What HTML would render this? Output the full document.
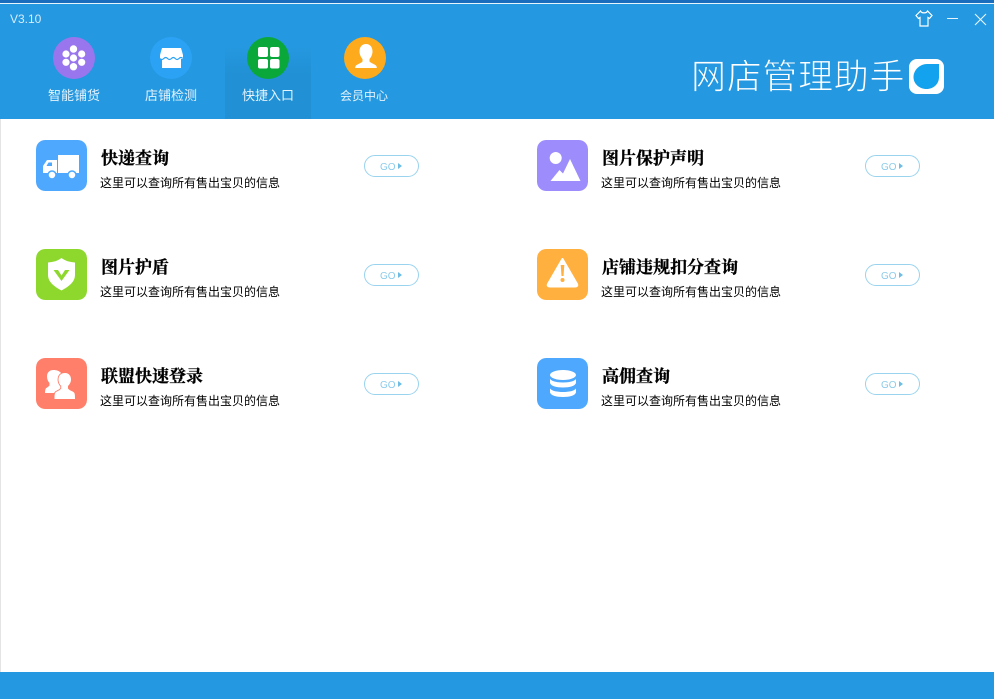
<!DOCTYPE html>
<html lang="zh"><head><meta charset="utf-8"><style>
*{box-sizing:border-box;margin:0;padding:0}
html,body{width:994px;height:699px;overflow:hidden;background:#fff;font-family:"Liberation Sans","Noto Sans CJK SC",sans-serif}
.abs,.abs *{position:absolute}
svg *{position:static}
#top{left:0;top:0;width:994px;height:119px;background:#2498e0}
.t{white-space:nowrap}
.nav{font-size:13px;color:#e4f3fd;top:87px;line-height:16px;width:80px;text-align:center}
.title{font-family:"Liberation Serif","Noto Serif CJK SC",serif;font-weight:700;font-size:17px;color:#000;line-height:20px;white-space:nowrap;-webkit-text-stroke:.3px #000}
.sub{font-size:12px;color:#000;line-height:16px;white-space:nowrap}
.go{width:55px;height:22px;border:1px solid #9ad3ee;border-radius:11px;background:#fff}
.go span{left:15px;top:5px;font-size:10px;line-height:14px;color:#8ccbea}
.go i{left:33px;top:7px;width:0;height:0;border-left:4px solid #6fbce4;border-top:3px solid transparent;border-bottom:3px solid transparent}
.ic{width:51px;height:51px;border-radius:9px}
</style></head><body>
<div class="abs" style="left:0;top:0;width:994px;height:699px">
<div id="top"></div>
<div style="left:0;top:0;width:994px;height:3px;background:#1a6cbc"></div>
<div style="left:0;top:3px;width:994px;height:1px;background:#e6f4fc"></div>
<div style="left:0;top:119px;width:1px;height:553px;background:#e4e4e4"></div>
<div style="left:0;top:672px;width:994px;height:27px;background:#2498e0"></div>
<div style="left:225px;top:47px;width:86px;height:72px;background:linear-gradient(#2498e0,#2190d4 40%)"></div>

<div class="t" style="left:10px;top:12px;font-size:12px;line-height:15px;color:#d6edfc">V3.10</div>

<svg style="left:53px;top:37px" width="42" height="42"><circle cx="21" cy="21" r="21" fill="#9a76ee"/><g fill="#fff"><circle cx="20.500" cy="12" r="3.700"/><circle cx="13" cy="17" r="3.600"/><circle cx="28.700" cy="17" r="3.600"/><circle cx="20.500" cy="21" r="3.600"/><circle cx="13" cy="25.300" r="3.600"/><circle cx="28.700" cy="25.300" r="3.600"/><circle cx="20.500" cy="29.700" r="3.700"/></g></svg>
<svg style="left:150px;top:37px" width="42" height="42"><circle cx="21" cy="21" r="21" fill="#2ca2f5"/><path d="M12 11h19l2 7v4H10v-4z" fill="#fff"/><rect x="12" y="22" width="19" height="9" fill="#fff"/><path d="M10 21.500q1.900 2 3.800 0t3.800 0 3.800 0 3.800 0 3.800 0 3.800 0" fill="none" stroke="#2ca2f5" stroke-width="1.200"/></svg>
<svg style="left:247px;top:37px" width="42" height="42"><circle cx="21" cy="21" r="21" fill="#0aa73a"/><g fill="#fff"><rect x="11" y="10" width="10" height="10" rx="2"/><rect x="23" y="10" width="9.500" height="10" rx="2"/><rect x="11" y="22" width="10" height="9.500" rx="2"/><rect x="23" y="22" width="9.500" height="9.500" rx="2"/></g></svg>
<svg style="left:344px;top:37px" width="42" height="42"><circle cx="21" cy="21" r="21" fill="#fdaa1c"/><path d="M22 7c-4.500 0-6.500 3.500-6.500 7.500 0 3 1.500 6 3 7.500v2.500c-1 1.500-5 2.500-6.500 4-.8.8-.8 2.500-.8 2.500h21.600s0-1.700-.8-2.500c-1.500-1.500-5.500-2.500-6.500-4V22c1.500-1.500 3-4.500 3-7.500 0-4-2-7.500-6.500-7.500z" fill="#fff"/></svg>

<div class="nav" style="left:34px;top:88px">智能铺货</div>
<div class="nav" style="left:131px;top:88px">店铺检测</div>
<div class="nav" style="left:228px;top:88px">快捷入口</div>
<div class="nav" style="left:324px;top:88px;font-size:12px">会员中心</div>

<svg style="left:914px;top:9px" width="20" height="19" fill="none" stroke="#fff" stroke-width="1.200"><path d="M6.500 2 2 6.500l2.500 3L6 8.500V17h8V8.500l1.500 1L18 6.500 13.500 2c-1 2.500-6 2.500-7 0z"/></svg>
<div style="left:947px;top:18px;width:11px;height:1px;background:#e8f5fd"></div>
<svg style="left:974px;top:13px" width="14" height="14" stroke="#e8f5fd" stroke-width="1.100"><path d="M1 1l11 11M12 1 1 12"/></svg>

<div class="t" style="left:691px;top:51px;font-size:35px;letter-spacing:.7px;line-height:48px;color:#fff;font-family:'Noto Sans CJK SC',sans-serif;-webkit-text-stroke:.9px #2498e0;paint-order:fill stroke">网店管理助手</div>
<svg style="left:909px;top:59px" width="35" height="35"><rect width="35" height="35" rx="8" fill="#fff"/><path d="M30 5v13c0 7-5.500 12-12.500 12S4.500 25 4.500 18 11 5 18 5z" fill="#12a2ee"/></svg>

<!-- row 1 left -->
<svg class="ic" style="left:36px;top:140px" viewBox="0 0 51 51"><rect width="51" height="51" rx="9" fill="#4ea8fd"/><rect x="22" y="15" width="21" height="18" fill="#fff"/><path d="M21 20v13H7v-7l4-6z" fill="#fff"/><path d="M10.500 26l2-3.500H16V26z" fill="#4ea8fd"/><circle cx="16" cy="35" r="4" fill="#fff" stroke="#4ea8fd" stroke-width="1.500"/><circle cx="36" cy="35" r="4" fill="#fff" stroke="#4ea8fd" stroke-width="1.500"/></svg>
<div class="title" style="left:101px;top:149px">快递查询</div>
<div class="sub" style="left:100px;top:175px">这里可以查询所有售出宝贝的信息</div>
<div class="go" style="left:364px;top:155px"><span>GO</span><i></i></div>

<!-- row 1 right -->
<svg class="ic" style="left:537px;top:140px" viewBox="0 0 51 51"><rect width="51" height="51" rx="9" fill="#9d8cfb"/><circle cx="18.700" cy="18" r="6" fill="#fff"/><path d="M13.500 41 22.500 30l3.500 3.500L33 19l10.500 22z" fill="#fff"/></svg>
<div class="title" style="left:602px;top:149px">图片保护声明</div>
<div class="sub" style="left:601px;top:175px">这里可以查询所有售出宝贝的信息</div>
<div class="go" style="left:865px;top:155px"><span>GO</span><i></i></div>

<!-- row 2 left -->
<svg class="ic" style="left:36px;top:249px" viewBox="0 0 51 51"><rect width="51" height="51" rx="9" fill="#8ed82e"/><path d="M25.500 9c4 3 8 4 13.500 4.500v12c0 8-6.500 12-13.500 16-7-4-13.500-8-13.500-16v-12C17.500 13 21.500 12 25.500 9z" fill="#fff"/><path d="M17.500 21h4.500l3.500 5.500L29 21h4.500l-8 11z" fill="#8ed82e"/></svg>
<div class="title" style="left:101px;top:258px">图片护盾</div>
<div class="sub" style="left:100px;top:284px">这里可以查询所有售出宝贝的信息</div>
<div class="go" style="left:364px;top:264px"><span>GO</span><i></i></div>

<!-- row 2 right -->
<svg class="ic" style="left:537px;top:249px" viewBox="0 0 51 51"><rect width="51" height="51" rx="9" fill="#ffb03f"/><path d="M25.500 10 40 35q1 2.500-2 2.500H13q-3 0-2-2.500z" fill="#fff" stroke="#fff" stroke-width="2" stroke-linejoin="round"/><path d="M23.700 16h3.600l-.8 11h-2z" fill="#ffb03f"/><circle cx="25.500" cy="31" r="2" fill="#ffb03f"/></svg>
<div class="title" style="left:602px;top:258px">店铺违规扣分查询</div>
<div class="sub" style="left:601px;top:284px">这里可以查询所有售出宝贝的信息</div>
<div class="go" style="left:865px;top:264px"><span>GO</span><i></i></div>

<!-- row 3 left -->
<svg class="ic" style="left:36px;top:358px" viewBox="0 0 51 51"><rect width="51" height="51" rx="9" fill="#ff7f6a"/><path id="b" d="M17.500 12c-4.500 0-6.500 3-6.500 6.500 0 3 1.200 5 2.500 6.500v2.500c-.8 1.200-2.500 1.800-3.500 2.800-1 1-1 4.700-1 4.700h12l8-8-4-12c-1.500-2-4.500-3-7.500-3z" fill="#fff"/><path d="M29 15c-4.500 0-6.500 3-6.500 6.500 0 3 1.200 5 2.700 6.500v2.500c-.8 1.500-3.700 2.500-5.200 3.500-1.500 1-1.500 3.500-1.500 7h20.500c0-3.500 0-6-1.500-7-1.500-1-4.700-2-5.500-3.500V28c1.500-1.500 3-3.500 3-6.500 0-3.500-2-6.500-6-6.500z" fill="#fff" stroke="#ff7f6a" stroke-width="1.800" paint-order="stroke"/></svg>
<div class="title" style="left:101px;top:367px">联盟快速登录</div>
<div class="sub" style="left:100px;top:393px">这里可以查询所有售出宝贝的信息</div>
<div class="go" style="left:364px;top:373px"><span>GO</span><i></i></div>

<!-- row 3 right -->
<svg class="ic" style="left:537px;top:358px" viewBox="0 0 51 51"><rect width="51" height="51" rx="9" fill="#4ea8fd"/><ellipse cx="26" cy="17" rx="13" ry="5" fill="#fff"/><path d="M13 21c2 2.500 7 3.500 13 3.500s11-1 13-3.500v4c-1 3-6 4.500-13 4.500s-12-1.500-13-4.500z" fill="#fff"/><path d="M13 30.500c2 2.500 7 3.500 13 3.500s11-1 13-3.500v4c-1 3-6 4.500-13 4.500s-12-1.500-13-4.500z" fill="#fff"/></svg>
<div class="title" style="left:602px;top:367px">高佣查询</div>
<div class="sub" style="left:601px;top:393px">这里可以查询所有售出宝贝的信息</div>
<div class="go" style="left:865px;top:373px"><span>GO</span><i></i></div>
</div>
</body></html>
